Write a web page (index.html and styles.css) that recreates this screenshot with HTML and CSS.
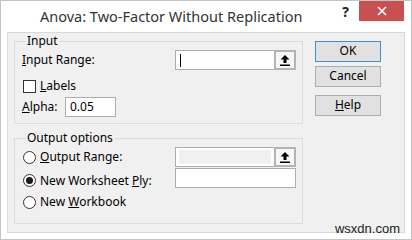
FILE: index.html
```html
<!DOCTYPE html>
<html lang="en">
<head>
  <meta charset="UTF-8">
  <title>Anova: Two-Factor Without Replication</title>
  <link rel="stylesheet" href="styles.css">
</head>
<body>
  <div class="window">
    <div class="titlebar">
      <span class="title">Anova: Two-Factor Without Replication</span>
      <span class="help-q">?</span>
      <span class="close">
        <svg width="10" height="10" viewBox="0 0 10 10"><path d="M1 1 L9 9 M9 1 L1 9" stroke="#fff" stroke-width="1.6"/></svg>
      </span>
    </div>
    <div class="dialog">
      <div class="groups">
        <fieldset class="group group-input">
          <legend>Input</legend>
          <div class="row">
            <span class="label"><u>I</u>nput Range:</span>
            <div class="refedit">
              <span class="field"><span class="caret"></span></span>
              <span class="ref-btn">
                <svg width="10" height="11" viewBox="0 0 10 11"><path d="M5 0 L9.5 4.5 L6.5 4.5 L6.5 8 L3.5 8 L3.5 4.5 L0.5 4.5 Z" fill="#000"/><rect x="0" y="9.5" width="10" height="1.5" fill="#000"/></svg>
              </span>
            </div>
          </div>
          <div class="row row-check">
            <span class="checkbox"></span>
            <span class="label"><u>L</u>abels</span>
          </div>
          <div class="row row-alpha">
            <span class="label label-alpha"><u>A</u>lpha:</span>
            <span class="textbox alpha">0.05</span>
          </div>
        </fieldset>

        <fieldset class="group group-output">
          <legend>Output options</legend>
          <div class="row">
            <span class="radio"></span>
            <span class="label"><u>O</u>utput Range:</span>
            <div class="refedit disabled">
              <span class="field"><span class="fill"></span></span>
              <span class="ref-btn">
                <svg width="10" height="11" viewBox="0 0 10 11"><path d="M5 0 L9.5 4.5 L6.5 4.5 L6.5 8 L3.5 8 L3.5 4.5 L0.5 4.5 Z" fill="#000"/><rect x="0" y="9.5" width="10" height="1.5" fill="#000"/></svg>
              </span>
            </div>
          </div>
          <div class="row row-ply">
            <span class="radio checked"></span>
            <span class="label">New Worksheet <u>P</u>ly:</span>
            <span class="textbox ply"></span>
          </div>
          <div class="row row-book">
            <span class="radio"></span>
            <span class="label">New <u>W</u>orkbook</span>
          </div>
        </fieldset>
      </div>

      <div class="buttons">
        <div class="btn btn-default">OK</div>
        <div class="btn">Cancel</div>
        <div class="btn btn-help"><u>H</u>elp</div>
      </div>
    </div>
    <div class="watermark">wsxdn.com</div>
  </div>
</body>
</html>
```

FILE: styles.css
```css
body {
  margin: 0;
  font-family: "Noto Sans", "Open Sans", sans-serif;
  font-size: 12px;
  color: #000;
  background: #fff;
}
.window {
  position: relative;
  width: 410px;
  height: 238px;
  border: 1px solid #c4c4c4;
  background: #fff;
}
.titlebar {
  display: flex;
  align-items: flex-start;
  height: 31px;
}
.title {
  margin-left: 39px;
  margin-top: 6px;
  font-size: 14.5px;
  color: #333;
  line-height: 18px;
}
.help-q {
  margin-left: auto;
  margin-top: 3px;
  font-size: 14px;
  font-weight: bold;
  color: #222;
  line-height: 16px;
}
.close {
  display: flex;
  align-items: center;
  justify-content: center;
  width: 45px;
  height: 20px;
  margin-left: 10px;
  margin-right: 7px;
  background: #c75050;
}
.dialog {
  display: flex;
  height: 199px;
  margin: 0 6px;
  border: 1px solid #d9d9d9;
  background: #f0f0f0;
}
.groups {
  display: flex;
  flex-direction: column;
  width: 289px;
  margin-left: 6px;
}
.group {
  margin: 0;
  padding: 1px 6px 6px 7px;
  border: 1px solid #dcdcdc;
  min-width: 0;
}
.group legend {
  padding: 0 1px;
  margin-left: 4px;
  line-height: 16px;
  color: #000;
}
.group-output {
  margin-top: 6px;
  padding-bottom: 11px;
}
.row {
  display: flex;
  align-items: center;
  height: 20px;
}
.label {
  line-height: 16px;
  white-space: nowrap;
}
.row-check {
  margin-top: 6px;
}
.row-alpha {
  margin-top: 1px;
}
.row-ply {
  margin-top: 1px;
  height: 24px;
  align-items: flex-end;
}
.row-ply .radio,
.row-ply .label {
  margin-bottom: 5px;
}
.row-ply .label {
  margin-bottom: 3px;
}
.row-ply .textbox {
  align-self: flex-start;
}
.row-book {
  margin-top: 0;
}
.refedit {
  display: flex;
  margin-left: auto;
  width: 121px;
  height: 20px;
  box-sizing: border-box;
  border: 1px solid #adadad;
  background: #fff;
}
.field {
  flex: 1;
  display: flex;
  align-items: center;
  padding: 2px 3px;
}
.caret {
  width: 1px;
  height: 13px;
  margin-left: 1px;
  background: #000;
}
.refedit.disabled .fill {
  flex: 1;
  height: 14px;
  background: #f0f0f0;
}
.ref-btn {
  display: flex;
  align-items: center;
  justify-content: center;
  width: 18px;
  margin: -1px -1px -1px 0;
  border: 2px solid #b4b4b4;
  background: #f7f7f7;
}
.checkbox,
.radio {
  width: 13px;
  height: 13px;
  box-sizing: border-box;
  margin-left: 1px;
  margin-right: 4px;
  border: 1px solid #333;
  background: #fff;
}
.radio {
  border-radius: 50%;
  display: flex;
  align-items: center;
  justify-content: center;
}
.radio.checked::after {
  content: "";
  width: 7px;
  height: 7px;
  border-radius: 50%;
  background: #1a1a1a;
}
.textbox {
  height: 20px;
  box-sizing: border-box;
  border: 1px solid #adadad;
  background: #fff;
  padding: 1px 4px;
  line-height: 16px;
}
.label-alpha {
  width: 43px;
}
.alpha {
  width: 51px;
}
.ply {
  margin-left: auto;
  width: 121px;
}
.buttons {
  display: flex;
  flex-direction: column;
  margin-left: 12px;
  padding-top: 8px;
}
.btn {
  width: 66px;
  height: 21px;
  box-sizing: border-box;
  border: 1px solid #adadad;
  background: #e1e1e1;
  text-align: center;
  line-height: 18px;
}
.btn + .btn {
  margin-top: 4px;
}
.btn-default {
  border-color: #3c8fd6;
}
.buttons .btn-help {
  margin-top: 8px;
}
.watermark {
  position: absolute;
  right: 11px;
  bottom: 3px;
  font-family: "Liberation Sans", Arial, sans-serif;
  font-size: 13px;
  color: #222;
}
```
